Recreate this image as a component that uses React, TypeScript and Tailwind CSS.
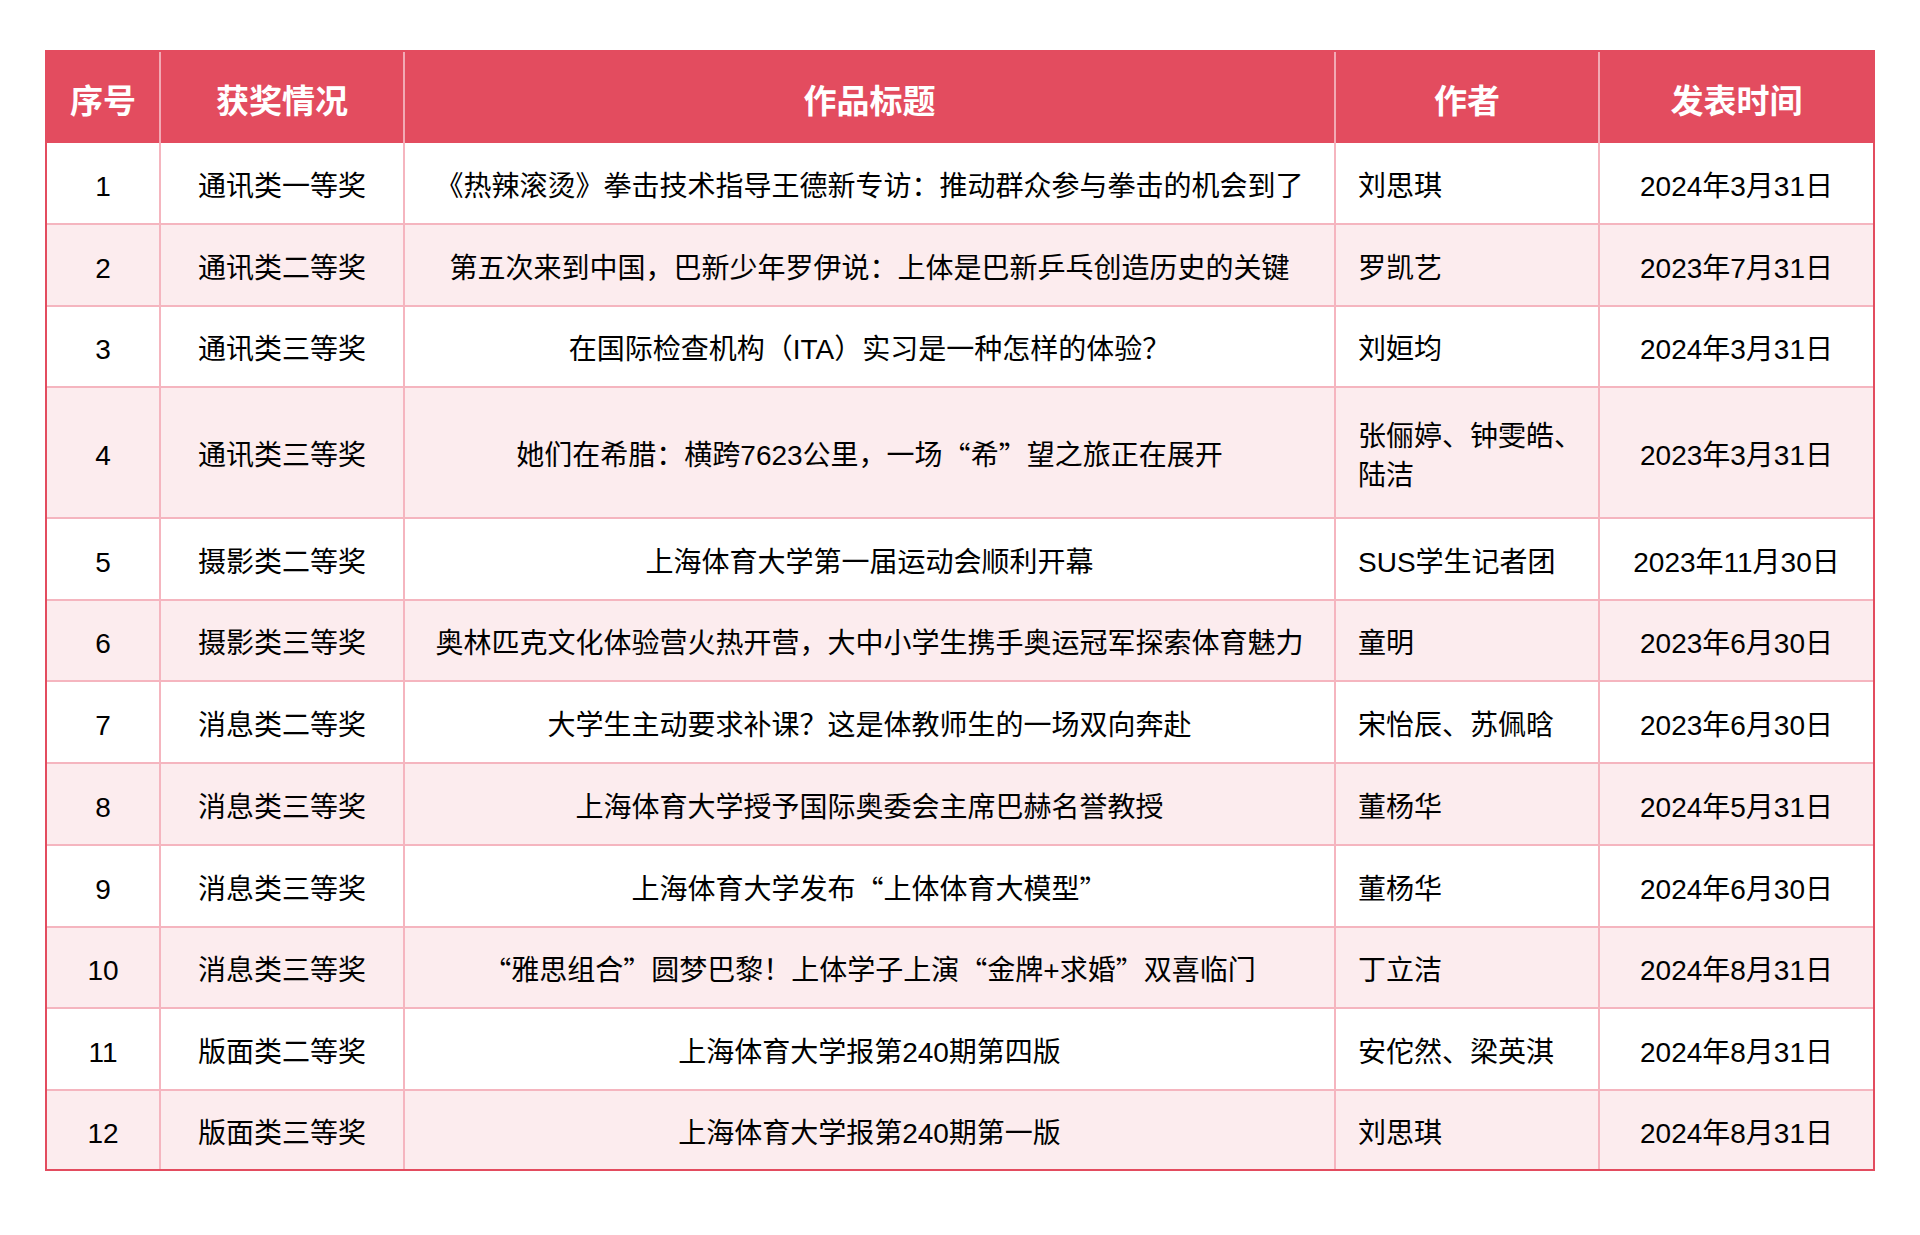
import React from "react";

type Row = { no: string; award: string; title: string; author: React.ReactNode; date: string; h: string };

const rows: Row[] = [
  { no: "1", award: "通讯类一等奖", title: "《热辣滚烫》拳击技术指导王德新专访：推动群众参与拳击的机会到了", author: "刘思琪", date: "2024年3月31日", h: "h-[82px]" },
  { no: "2", award: "通讯类二等奖", title: "第五次来到中国，巴新少年罗伊说：上体是巴新乒乓创造历史的关键", author: "罗凯艺", date: "2023年7月31日", h: "h-[82px]" },
  { no: "3", award: "通讯类三等奖", title: "在国际检查机构（ITA）实习是一种怎样的体验？", author: "刘姮均", date: "2024年3月31日", h: "h-[81px]" },
  {
    no: "4",
    award: "通讯类三等奖",
    title: "她们在希腊：横跨7623公里，一场“希”望之旅正在展开",
    author: (
      <>
        张俪婷、钟雯皓、
        <br />
        陆洁
      </>
    ),
    date: "2023年3月31日",
    h: "h-[131px]",
  },
  { no: "5", award: "摄影类二等奖", title: "上海体育大学第一届运动会顺利开幕", author: "SUS学生记者团", date: "2023年11月30日", h: "h-[82px]" },
  { no: "6", award: "摄影类三等奖", title: "奥林匹克文化体验营火热开营，大中小学生携手奥运冠军探索体育魅力", author: "童明", date: "2023年6月30日", h: "h-[81px]" },
  { no: "7", award: "消息类二等奖", title: "大学生主动要求补课？这是体教师生的一场双向奔赴", author: "宋怡辰、苏佩晗", date: "2023年6月30日", h: "h-[82px]" },
  { no: "8", award: "消息类三等奖", title: "上海体育大学授予国际奥委会主席巴赫名誉教授", author: "董杨华", date: "2024年5月31日", h: "h-[82px]" },
  { no: "9", award: "消息类三等奖", title: "上海体育大学发布“上体体育大模型”", author: "董杨华", date: "2024年6月30日", h: "h-[82px]" },
  { no: "10", award: "消息类三等奖", title: "“雅思组合”圆梦巴黎！上体学子上演“金牌+求婚”双喜临门", author: "丁立洁", date: "2024年8月31日", h: "h-[81px]" },
  { no: "11", award: "版面类二等奖", title: "上海体育大学报第240期第四版", author: "安佗然、梁英淇", date: "2024年8月31日", h: "h-[82px]" },
  { no: "12", award: "版面类三等奖", title: "上海体育大学报第240期第一版", author: "刘思琪", date: "2024年8月31日", h: "h-[78px]" },
];

function Cjkq({ text }: { text: string }) {
  const parts = text.split(/([“”])/);
  return (
    <>
      {parts.map((p, i) =>
        p === "“" || p === "”" ? (
          <span key={i} className="font-['Noto_Sans_CJK_SC',sans-serif]">
            {p}
          </span>
        ) : (
          <React.Fragment key={i}>{p}</React.Fragment>
        )
      )}
    </>
  );
}

const cols = "grid grid-cols-[114px_244px_931px_264px_273px]";

export default function App() {
  return (
    <div className="min-h-[1235px] bg-white pt-[50px] px-[45px] font-['Liberation_Sans','Noto_Sans_CJK_SC',sans-serif]">
      <div className="border-2 border-[#e34c5f]">
        <div className={`${cols} h-[91px] bg-[#e34c5f] text-white text-[33px] font-bold`}>
          <div className="flex items-center justify-center pt-[8px] border-r-2 border-[#f2a9b4]">序号</div>
          <div className="flex items-center justify-center pt-[8px] border-r-2 border-[#f2a9b4]">获奖情况</div>
          <div className="flex items-center justify-center pt-[8px] border-r-2 border-[#f2a9b4]">作品标题</div>
          <div className="flex items-center justify-center pt-[8px] border-r-2 border-[#f2a9b4]">作者</div>
          <div className="flex items-center justify-center pt-[8px]">发表时间</div>
        </div>
        {rows.map((r, i) => (
          <div
            key={r.no}
            className={`${cols} ${r.h} text-[28px] text-black leading-[39px] ${
              i % 2 === 1 ? "bg-[#fcecee]" : "bg-white"
            } ${i < rows.length - 1 ? "border-b-2 border-[#f5b5bf]" : ""}`}
          >
            <div className="flex items-center justify-center pt-[6px] border-r-2 border-[#f5b5bf]">{r.no}</div>
            <div className="flex items-center justify-center pt-[6px] border-r-2 border-[#f5b5bf]">{r.award}</div>
            <div className="flex items-center justify-center pt-[6px] border-r-2 border-[#f5b5bf] whitespace-nowrap">
              <Cjkq text={r.title} />
            </div>
            <div className="flex items-center pt-[6px] border-r-2 border-[#f5b5bf] pl-[22px]">
              <div>{r.author}</div>
            </div>
            <div className="flex items-center justify-center pt-[6px]">{r.date}</div>
          </div>
        ))}
      </div>
    </div>
  );
}
